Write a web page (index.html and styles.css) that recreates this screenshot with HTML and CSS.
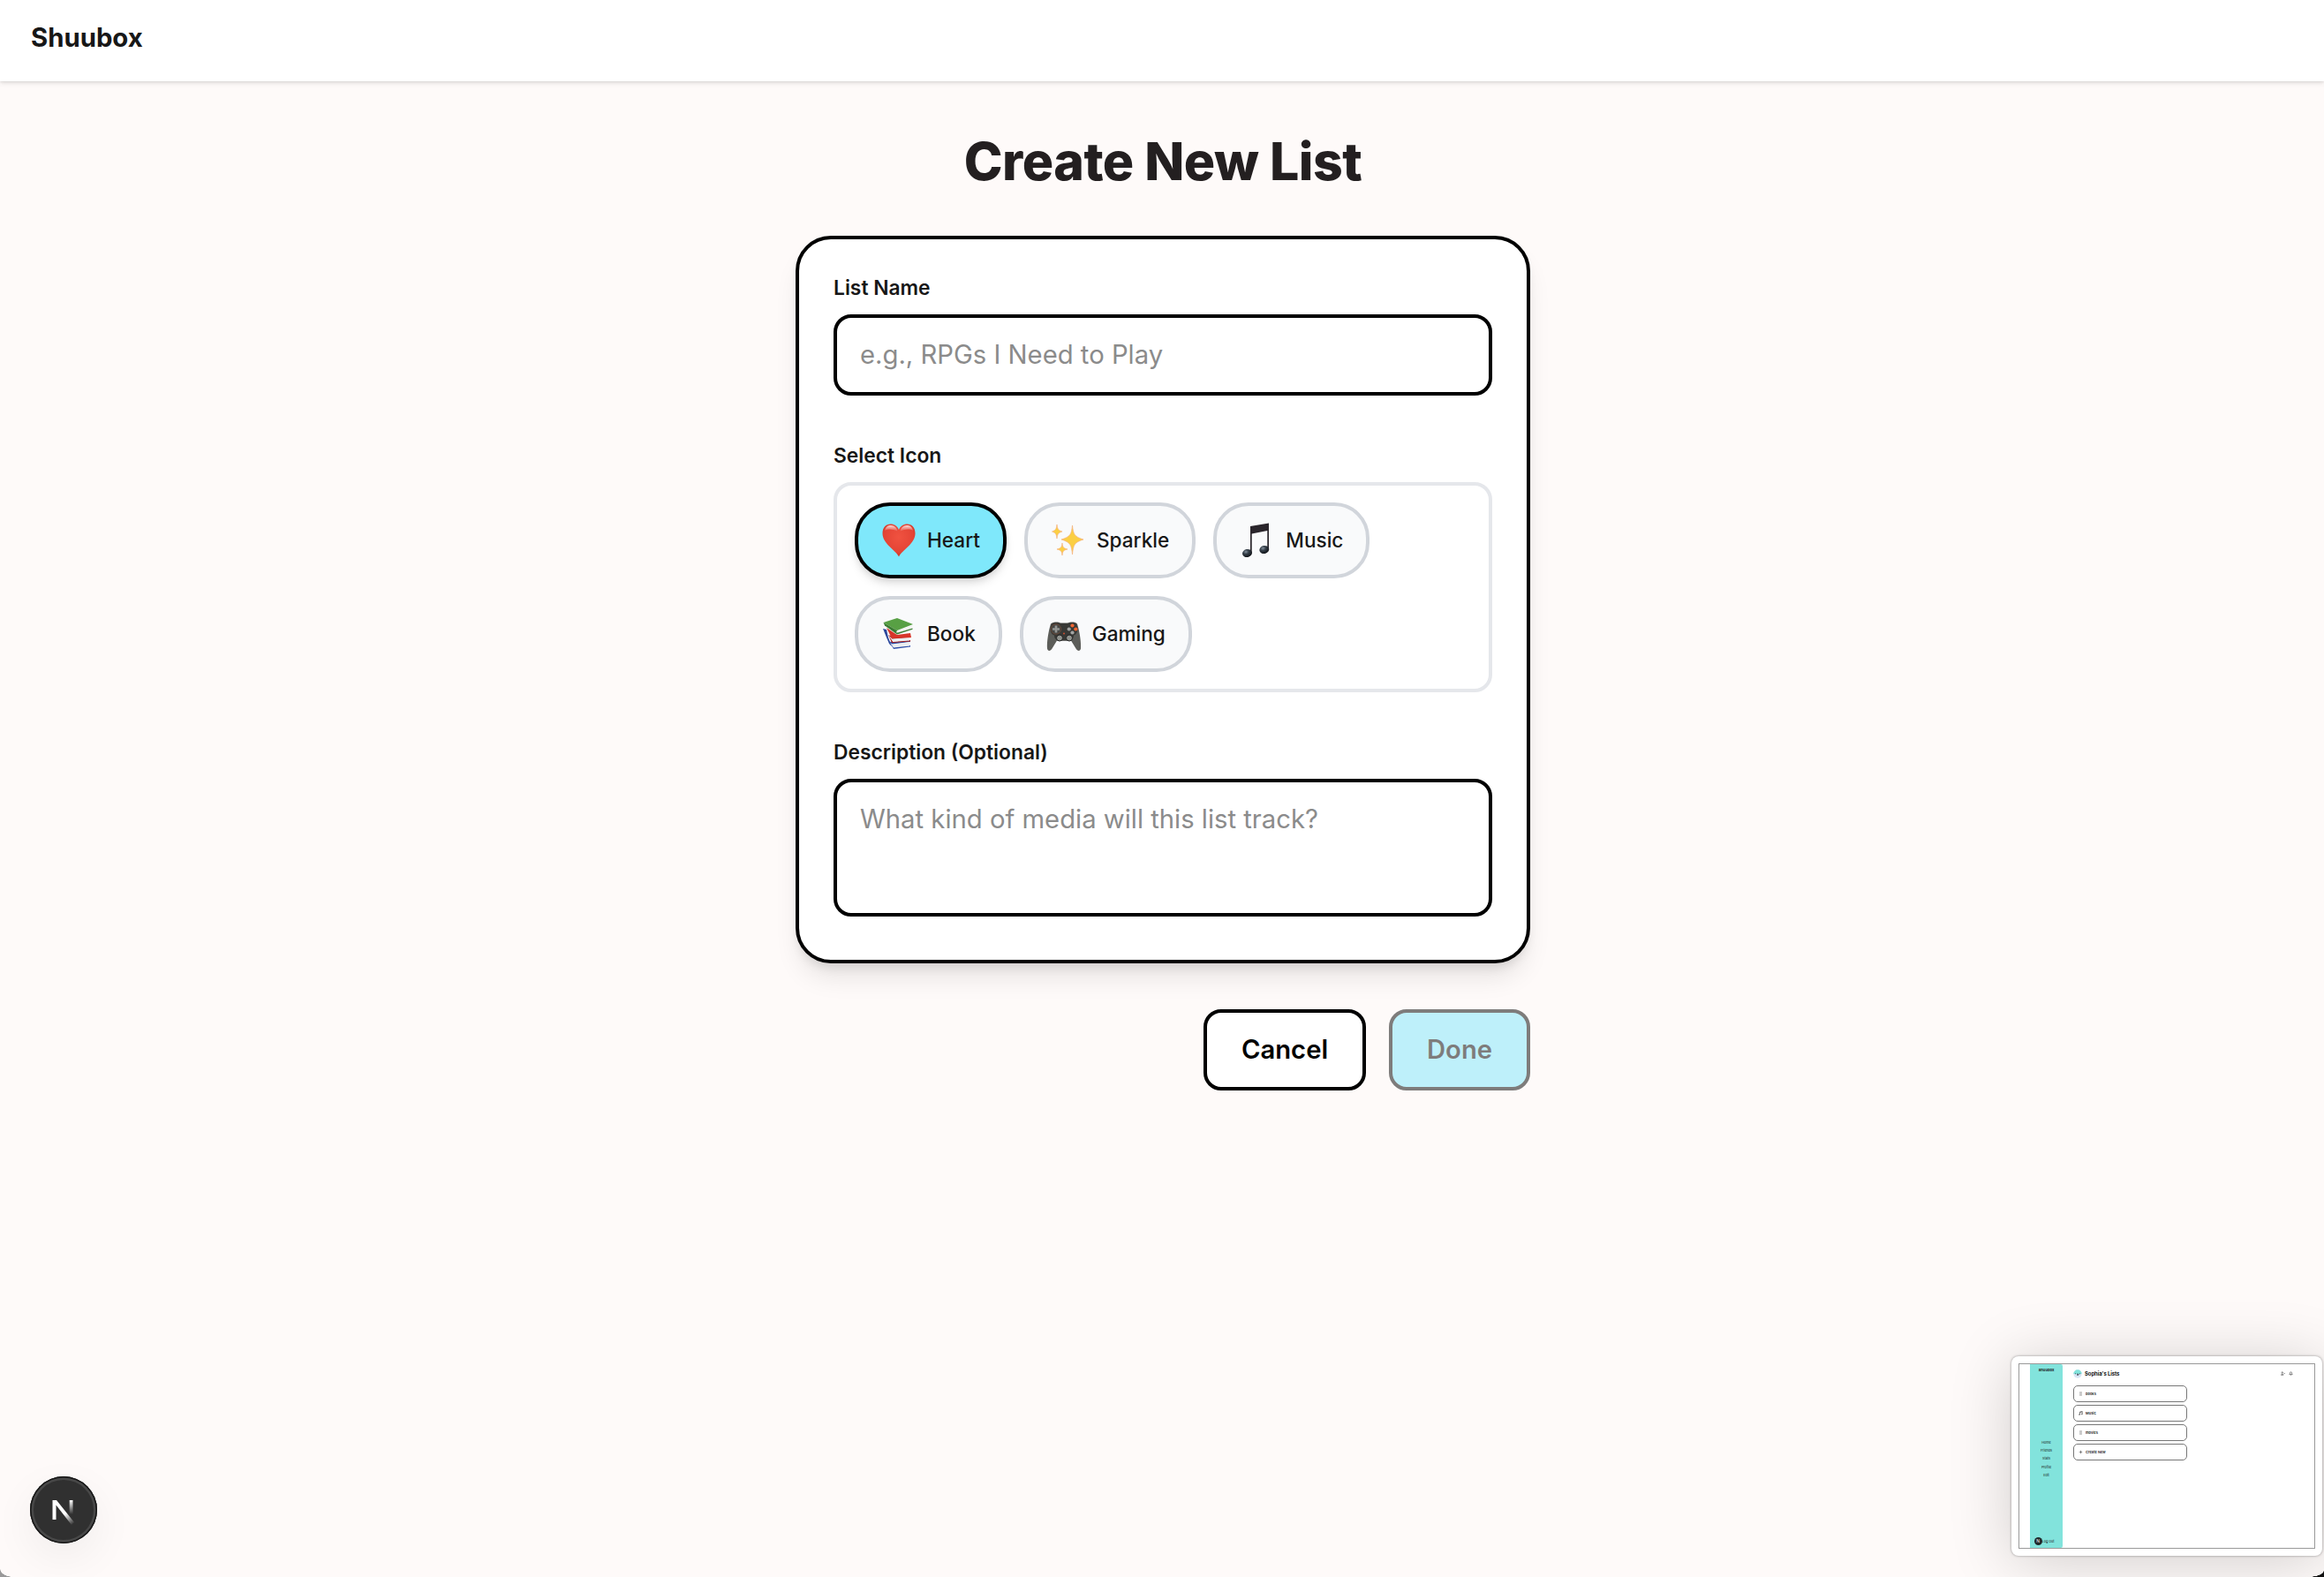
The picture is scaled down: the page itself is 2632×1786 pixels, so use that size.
FILE: index.html
```html
<!DOCTYPE html>
<html lang="en">
<head>
    <meta charset="UTF-8">
    <meta name="viewport" content="width=device-width, initial-scale=1.0">
    <title>Shuubox</title>
    <link rel="stylesheet" href="styles.css">
</head>
<body>
    <header class="navbar">
        <span class="brand">Shuubox</span>
    </header>

    <main class="page">
        <h1 class="page-title">Create New List</h1>

        <form class="card">
            <div class="field">
                <label class="label" for="list-name">List Name</label>
                <input class="input" id="list-name" type="text" placeholder="e.g., RPGs I Need to Play">
            </div>

            <div class="field">
                <span class="label">Select Icon</span>
                <div class="icon-picker">
                    <button type="button" class="chip selected">
                        <svg class="emoji" viewBox="0 0 40 40">
                            <defs>
                                <radialGradient id="heart-fill" cx=".5" cy=".4" r=".65">
                                    <stop offset="0" stop-color="#f05240"/>
                                    <stop offset=".7" stop-color="#e44435"/>
                                    <stop offset="1" stop-color="#c2301f"/>
                                </radialGradient>
                                <linearGradient id="heart-shine" x1="0" y1="0" x2="0" y2="1">
                                    <stop offset="0" stop-color="#fff" stop-opacity=".8"/>
                                    <stop offset="1" stop-color="#fff" stop-opacity="0"/>
                                </linearGradient>
                            </defs>
                            <path fill="url(#heart-fill)" d="M20 38.500C16 30.500 1.500 24 1.500 12C1.500 5.500 5.500 1.500 10.500 1.500C15 1.500 18.500 4 20 8C21.500 4 25 1.500 29.500 1.500C34.500 1.500 38.500 5.500 38.500 12C38.500 24 24 30.500 20 38.500Z"/>
                            <path fill="url(#heart-shine)" d="M4 9C5 4 8 3 11 3C15 3 18 6 18.500 10C13 7 8 7 4 9ZM36 9C35 4 32 3 29 3C25 3 22 6 21.500 10C27 7 32 7 36 9Z"/>
                        </svg>
                        Heart
                    </button>
                    <button type="button" class="chip">
                        <svg class="emoji" viewBox="0 0 40 40">
                            <g fill="#fbcf43" stroke="#f5b183" stroke-width=".7">
                                <path d="M24.500 3C25.500 13 27 16 37 19C27 22 25.500 25 24.500 36C23.500 25 22 22 12 19C22 16 23.500 13 24.500 3Z"/>
                                <path d="M7 2C7.600 7 8.300 8.500 13 10C8.300 11.500 7.600 13 7 18C6.400 13 5.700 11.500 1.500 10C5.700 8.500 6.400 7 7 2Z"/>
                                <path d="M13 23C13.600 28 14.300 28.800 19 30C14.300 31.200 13.600 32 13 37C12.400 32 11.700 31.200 7 30C11.700 28.800 12.400 28 13 23Z"/>
                            </g>
                        </svg>
                        Sparkle
                    </button>
                    <button type="button" class="chip">
                        <svg class="emoji" viewBox="0 0 40 40">
                            <defs>
                                <radialGradient id="note-fill" cx=".4" cy=".3" r=".7">
                                    <stop offset="0" stop-color="#84909c"/>
                                    <stop offset=".4" stop-color="#36404a"/>
                                    <stop offset="1" stop-color="#101216"/>
                                </radialGradient>
                            </defs>
                            <path fill="#2a252b" d="M12 4L33 .5V29H31.300V9L13.700 12.500V34H12Z"/>
                            <ellipse cx="8.500" cy="34.500" rx="5.500" ry="4.500" transform="rotate(-12 8.500 34.500)" fill="url(#note-fill)"/>
                            <ellipse cx="27.800" cy="30.500" rx="5.500" ry="4.500" transform="rotate(-12 27.800 30.500)" fill="url(#note-fill)"/>
                        </svg>
                        Music
                    </button>
                    <button type="button" class="chip">
                        <svg class="emoji" viewBox="0 0 40 40">
                            <path fill="#2b479b" d="M2 14L6 15L8 24L12 34L9 31L6 24Z"/>
                            <path fill="#2f4fa8" d="M9 29L32 27L33 29L13 32ZM10 30L14 37L33 34.500V33L14 35Z"/>
                            <path fill="#eceef0" d="M12 31.500L32 29L32 33.500L14 35.500Z"/>
                            <path fill="#a81f1c" d="M8 21L13 23H32L33 24L13 26ZM8 21L12 30L33 28.500V27L13 28.500Z"/>
                            <path fill="#eef0f1" d="M13 25.500L32 24L32 27.500L13 29Z"/>
                            <path fill="#d8362a" d="M6 13L18 21L33 19L34 24L12 25Z"/>
                            <path fill="#58a044" d="M2.500 7L18 2L36 9L18 16Z"/>
                            <path fill="#3b7d32" d="M2.500 7L18 16V20.500L4 10.500Z"/>
                            <path fill="#f1f2ee" d="M17 17L35 10.500L34.500 14L18 19.500Z"/>
                            <path fill="#3b7d32" d="M17 19L35.500 13.500V14.700L18 20.500Z"/>
                        </svg>
                        Book
                    </button>
                    <button type="button" class="chip">
                        <svg class="emoji" viewBox="0 -1.500 40 40">
                            <path fill="#5c5d59" d="M5 7C9 4 14 5 16 6H24C27 5 32 4 35 7C38 17 39.500 28 39 35C38.500 38.500 35 38 33.500 35L28 26H12L6.500 35C5 38 1.500 38.500 1 35C.5 28 2 17 5 7Z"/>
                            <path fill="#383936" d="M6 7C10 4.500 14 6 16 6.500H24C27 5.500 31 4.500 34 7C37 13 35 19 31 20C31 25 28 26 20 26S9 25 9 20C5 19 3 13 6 7Z"/>
                            <circle cx="11" cy="13" r="5.700" fill="#454644" stroke="#794b35" stroke-width=".7"/>
                            <path stroke="#949693" stroke-width="2.700" d="M11 9V17M7 13H15"/>
                            <circle cx="29.500" cy="9" r="2.100" fill="#ef6532"/>
                            <circle cx="33.300" cy="13" r="2.100" fill="#ef6532"/>
                            <circle cx="29.500" cy="17" r="2.100" fill="#a2a4a2"/>
                            <circle cx="25.700" cy="13" r="2.100" fill="#a2a4a2"/>
                            <g fill="#92948f" stroke="#222" stroke-width="1">
                                <circle cx="15" cy="23" r="3.500"/>
                                <circle cx="26" cy="23" r="3.500"/>
                            </g>
                            <circle cx="20" cy="18" r="1" fill="#d25132"/>
                        </svg>
                        Gaming
                    </button>
                </div>
            </div>

            <div class="field">
                <label class="label" for="description">Description (Optional)</label>
                <textarea class="input textarea" id="description" placeholder="What kind of media will this list track?"></textarea>
            </div>
        </form>

        <div class="actions">
            <button type="button" class="button">Cancel</button>
            <button type="button" class="button primary" disabled>Done</button>
        </div>
    </main>

    <div class="dev-badge">
        <svg viewBox="0 0 76 76">
            <defs>
                <linearGradient id="n-diagonal" x1="39" y1="43" x2="48" y2="55" gradientUnits="userSpaceOnUse">
                    <stop stop-color="#fff"/>
                    <stop offset="1" stop-color="#fff" stop-opacity="0"/>
                </linearGradient>
                <linearGradient id="n-stem" x1="46" y1="27" x2="46" y2="43" gradientUnits="userSpaceOnUse">
                    <stop stop-color="#fff"/>
                    <stop offset="1" stop-color="#fff" stop-opacity="0"/>
                </linearGradient>
            </defs>
            <path d="M25.500 49V27H30L50 52L47 55L29.500 32.500V49Z" fill="url(#n-diagonal)"/>
            <path d="M44.700 27H48.500V43H44.700Z" fill="url(#n-stem)"/>
        </svg>
    </div>

    <!-- Floating preview of the lists page -->
    <aside class="preview">
        <div class="preview-screen">
            <nav class="mini-nav">
                <b class="mini-brand">Shuubox</b>
                <div class="mini-links">
                    <span>Home</span>
                    <span>Friends</span>
                    <span>Stats</span>
                    <span>Profile</span>
                    <span>Edit</span>
                </div>
                <div class="mini-logout"><i class="mini-badge">N</i><span>Log Out</span></div>
            </nav>
            <section class="mini-main">
                <div class="mini-header">
                    <svg class="mini-avatar" viewBox="0 0 10 10">
                        <circle cx="5" cy="5" r="4.700" fill="#d9e6f5"/>
                        <path d="M.3 5a4.700 4.700 0 0 1 9.400 0Z" fill="#82e3dc"/>
                        <path d="M2 4.800h1M4 5.200h2v1H4M7 4.800h1" stroke="#223" stroke-width=".7" fill="none"/>
                    </svg>
                    <b>Sophia's Lists</b>
                    <div class="mini-tools">
                        <svg viewBox="0 0 10 10"><path d="M1 8.500V7.500Q3.500 5 6 7.500V8.500ZM3.500 1.500a1.500 1.500 0 1 1-.1 0M7 5H9.500"/></svg>
                        <svg viewBox="0 0 10 10"><path d="M1.500 7Q3 6 3 4Q3 1.500 5 1.500T7 4Q7 6 8.500 7ZM4 8.500H6"/></svg>
                    </div>
                </div>
                <div class="mini-row">
                    <svg viewBox="0 0 10 10"><path d="M2 1.500H8M2 3.800H8M2 6.200H8M2 8.500H8" opacity=".6"/></svg>books
                </div>
                <div class="mini-row">
                    <svg viewBox="0 0 10 10"><path d="M3 8V2L8.500 1V7M3 3L8.500 2"/><circle cx="2" cy="8" r="1"/><circle cx="7.500" cy="7" r="1"/></svg>Music
                </div>
                <div class="mini-row">
                    <svg viewBox="0 0 10 10"><path d="M2 1.500H8M2 3.800H8M2 6.200H8M2 8.500H8" opacity=".6"/></svg>movies
                </div>
                <div class="mini-row">
                    <svg viewBox="0 0 10 10"><path d="M5 1.500V8.500M1.500 5H8.500"/></svg>Create New
                </div>
            </section>
        </div>
    </aside>

    <div class="corner corner-left"></div>
    <div class="corner corner-right"></div>
</body>
</html>
```

FILE: styles.css
```css
* {
    box-sizing: border-box;
}
body {
    margin: 0;
    height: 1786px;
    overflow: hidden;
    position: relative;
    background: #fefaf9;
    color: #171717;
    font-family: Inter, sans-serif;
}
.navbar {
    height: 92px;
    padding: 24px 35px;
    background: #fff;
    box-shadow: 0 2px 6px rgba(0, 0, 0, 0.1), 0 1px 3px rgba(0, 0, 0, 0.08);
}
.brand {
    display: block;
    font-size: 29.3px;
    line-height: 37px;
    font-weight: 700;
}
.page {
    width: 832px;
    margin-left: 901px;
    padding-top: 55px;
}
.page-title {
    margin: 0 0 48px;
    text-align: center;
    font-size: 59px;
    line-height: 72px;
    font-weight: 850;
    letter-spacing: -0.5px;
    color: #231f20;
}
.card {
    display: flex;
    flex-direction: column;
    gap: 53px;
    height: 824px;
    padding: 40px 39px;
    background: #fff;
    border: 4px solid #000;
    border-radius: 40px;
    box-shadow: 0 20px 30px -6px rgba(0, 0, 0, 0.1), 0 8px 12px -4px rgba(0, 0, 0, 0.1);
}
.field {
    display: flex;
    flex-direction: column;
}
.label {
    font-size: 22.8px;
    line-height: 30px;
    margin-bottom: 15px;
    font-weight: 600;
}
.input {
    display: block;
    width: 100%;
    height: 92px;
    padding: 0 26px 1px;
    border: 4px solid #000;
    border-radius: 20px;
    background: #fff;
    color: #171717;
    font: 400 29.25px/40px Inter, sans-serif;
}
.input::placeholder {
    color: #8b8b8b;
    opacity: 1;
}
.textarea {
    height: 156px;
    padding: 22px 26px;
    resize: none;
}
.icon-picker {
    display: flex;
    flex-wrap: wrap;
    gap: 20px;
    height: 238px;
    padding: 19px 20px;
    border: 4px solid #e5e7eb;
    border-radius: 20px;
}
.chip {
    display: flex;
    align-items: center;
    gap: 12px;
    height: 86px;
    padding: 0 26px;
    border: 4px solid #d1d5db;
    border-radius: 40px;
    background: #f9fafb;
    color: #171717;
    font: 500 22.6px/32px Inter, sans-serif;
}
.chip.selected {
    border-color: #000;
    background: #7fe8fb;
    box-shadow: 0 8px 12px -2px rgba(0, 0, 0, 0.1), 0 4px 8px -2px rgba(0, 0, 0, 0.1);
}
.emoji {
    width: 40px;
    height: 40px;
}
.actions {
    display: flex;
    justify-content: flex-end;
    gap: 26px;
    margin-top: 52px;
}
.button {
    height: 92px;
    padding: 0 39px;
    border: 4px solid #000;
    border-radius: 20px;
    background: #fff;
    color: #000;
    font: 600 29.2px/40px Inter, sans-serif;
}
.button.primary {
    background: #7fe8fb;
    opacity: 0.5;
}
.dev-badge {
    position: absolute;
    left: 34px;
    top: 1672px;
    width: 76px;
    height: 76px;
    border-radius: 50%;
    background: #303030;
    box-shadow: inset 0 0 0 1.5px #171717, inset 0 0 0 4px #484848, 0 16px 50px rgba(0, 0, 0, 0.06);
}
.preview {
    position: absolute;
    left: 2278px;
    top: 1536px;
    width: 352px;
    height: 226px;
    padding: 8px;
    border-radius: 8px;
    background: #fff;
    box-shadow: 0 0 3px rgba(0, 0, 0, 0.4), 0 6px 70px rgba(0, 0, 0, 0.18);
}
.preview-screen {
    display: flex;
    height: 210px;
    padding-left: 12px;
    border: 1px solid #999;
    font-size: 4.3px;
    line-height: 6px;
}
.mini-nav {
    display: flex;
    flex-direction: column;
    align-items: center;
    width: 37px;
    padding: 4px 0;
    background: #82e3dc;
    border-radius: 0 2px 2px 0;
}
.mini-brand {
    font-size: 4.1px;
}
.mini-links {
    display: flex;
    flex-direction: column;
    align-items: center;
    gap: 3.2px;
    margin-top: 76px;
    font-size: 3.7px;
}
.mini-logout {
    display: flex;
    align-items: center;
    margin-top: auto;
    margin-right: 5px;
    margin-bottom: -1px;
    font-size: 3.7px;
}
.mini-badge {
    width: 9px;
    height: 9px;
    border-radius: 50%;
    background: #20292b;
    color: #fff;
    font-size: 5px;
    line-height: 9px;
    text-align: center;
    font-style: normal;
}
.mini-main {
    flex: 1;
    padding: 5px 24px 0 12px;
}
.mini-header {
    display: flex;
    align-items: center;
    gap: 3px;
    height: 11px;
    margin-bottom: 8px;
    font-size: 6px;
    letter-spacing: -0.1px;
}
.mini-avatar {
    width: 10px;
    height: 10px;
}
.mini-tools {
    display: flex;
    gap: 4px;
    margin-left: auto;
}
.mini-tools svg,
.mini-row svg {
    width: 5px;
    height: 5px;
    fill: none;
    stroke: #444;
    stroke-width: 1.2;
}
.mini-row {
    display: flex;
    align-items: center;
    gap: 3px;
    width: 129px;
    height: 19px;
    margin-bottom: 3px;
    padding-left: 5px;
    border: 1px solid #777;
    border-radius: 5px;
    font-size: 4px;
    font-weight: 600;
}

/* Rounded window corners */
.corner {
    position: absolute;
    bottom: 0;
}
.corner-left {
    left: 0;
    width: 15px;
    height: 9px;
    background: radial-gradient(ellipse 15px 9px at 100% 0, transparent 96%, #999 100%);
}
.corner-right {
    right: 0;
    width: 18px;
    height: 7px;
    background: radial-gradient(ellipse 18px 7px at 0 0, transparent 96%, #111 100%);
}
```
